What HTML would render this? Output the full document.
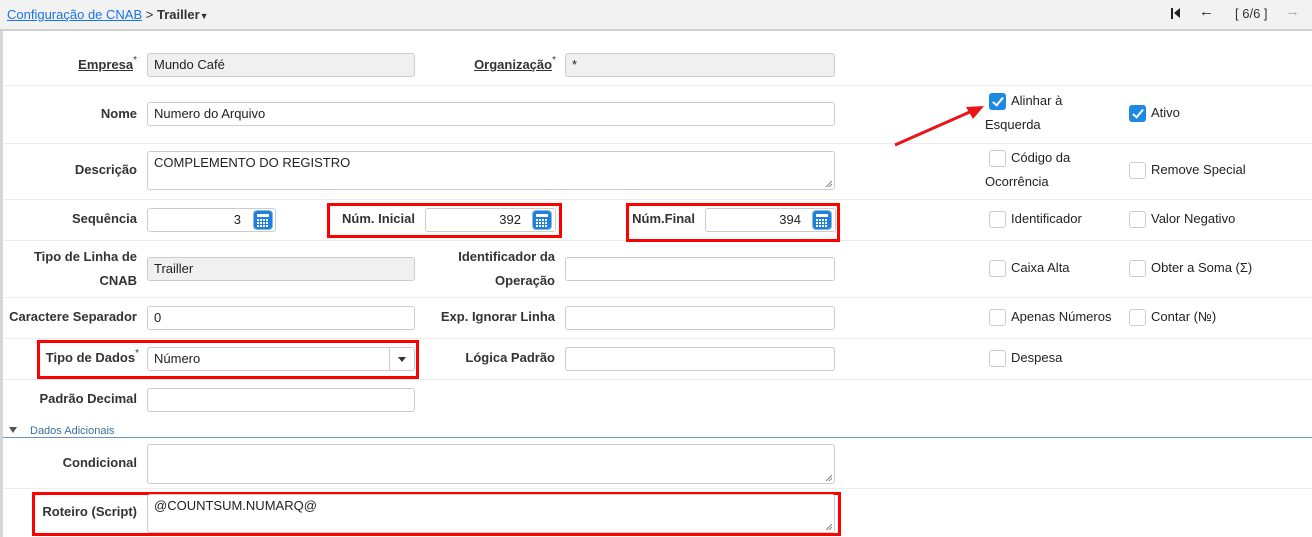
<!DOCTYPE html>
<html><head><meta charset="utf-8"><style>
*{box-sizing:border-box;margin:0;padding:0}
body{width:1312px;height:537px;overflow:hidden;background:#fff;font-family:"Liberation Sans",Arial,sans-serif;font-size:13px;color:#333;position:relative}
.a{position:absolute}
.hdr{left:0;top:0;width:1312px;height:31px;background:#f2f2f2;border-bottom:2px solid #d0d0d0}
.lb{position:absolute;text-align:right;font-weight:bold;color:#333;line-height:24px;white-space:nowrap}
.lb2{position:absolute;text-align:right;font-weight:bold;color:#333;line-height:24px}
.in{position:absolute;border:1px solid #ccc;border-radius:3px;height:24px;background:#fff;padding:0 6px;line-height:22px;color:#222;white-space:nowrap}
.ro{background:#f0f0f0}
.sep{position:absolute;left:3px;width:1309px;height:1px;background:#ececec}
.cb{position:absolute;width:17px;height:17px;border:1px solid #ccc;border-radius:3px;background:#fff}
.cb.on{background:#1e88e5;border-color:#1e88e5}
.cb.on:after{content:"";position:absolute;left:5px;top:1px;width:4px;height:9px;border:solid #fff;border-width:0 2px 2px 0;transform:rotate(40deg)}
.ct{position:absolute;color:#222;line-height:24px;white-space:nowrap}
.red{position:absolute;border:3px solid #f00}
sup{font-size:10px;font-weight:normal;vertical-align:top;position:relative;top:-4px}
.calc{position:absolute;width:20px;height:20px;border-radius:4px;background:#1e7fe0;border:1px solid #8bc}
.calc:before{content:"";position:absolute;left:3px;top:3px;width:12px;height:3px;background:#fff}
.calc:after{content:"";position:absolute;left:3px;top:8px;width:12px;height:8px;background:repeating-linear-gradient(90deg,#fff 0 2px,transparent 2px 3px),#1e7fe0;-webkit-mask:repeating-linear-gradient(0deg,#000 0 2px,transparent 2px 3px)}
.rs{position:absolute;right:2px;bottom:2px;width:6px;height:6px;background:linear-gradient(135deg,transparent 45%,#888 45%,#888 55%,transparent 55%,transparent 70%,#888 70%,#888 80%,transparent 80%)}
</style></head><body>
<div class="a" style="left:0;top:0;width:3px;height:537px;background:#d6d6d6"></div>
<div class="a hdr"></div>
<div class="a" style="left:7px;top:7px;line-height:16px;font-size:13px"><span style="color:#1a73e8;text-decoration:underline">Configuração de CNAB</span> <span style="color:#333">&gt;</span> <b style="color:#333">Trailler</b><span style="font-size:9px">&#9660;</span></div>
<div class="a" style="left:1171px;top:8px;width:2px;height:11px;background:#222"></div>
<div class="a" style="left:1174px;top:8px;width:0;height:0;border-top:5.5px solid transparent;border-bottom:5.5px solid transparent;border-right:6px solid #222"></div>
<div class="a" style="left:1199px;top:3px;font-size:15px;color:#222;font-weight:bold">&#8592;</div>
<div class="a" style="left:1235px;top:6px;color:#333">[ 6/6 ]</div>
<div class="a" style="left:1285px;top:3px;font-size:15px;color:#aaa;font-weight:bold">&#8594;</div>

<div class="sep" style="top:85px"></div>
<div class="sep" style="top:143px"></div>
<div class="sep" style="top:199px"></div>
<div class="sep" style="top:240px"></div>
<div class="sep" style="top:297px"></div>
<div class="sep" style="top:338px"></div>
<div class="sep" style="top:379px"></div>
<div class="sep" style="top:488px"></div>

<div class="lb" style="right:1175px;top:53px"><u>Empresa</u><sup>*</sup></div>
<div class="in ro" style="left:147px;top:53px;width:268px">Mundo Café</div>
<div class="lb" style="right:756px;top:53px"><u>Organização</u><sup>*</sup></div>
<div class="in ro" style="left:565px;top:53px;width:270px">*</div>

<div class="lb" style="right:1175px;top:102px">Nome</div>
<div class="in" style="left:147px;top:102px;width:688px">Numero do Arquivo</div>
<div class="cb on" style="left:989px;top:93px"></div>
<div class="ct" style="left:1011px;top:89px">Alinhar à</div>
<div class="ct" style="left:985px;top:113px">Esquerda</div>
<div class="cb on" style="left:1129px;top:105px"></div>
<div class="ct" style="left:1151px;top:101px">Ativo</div>

<div class="lb" style="right:1175px;top:158px">Descrição</div>
<div class="in" style="left:147px;top:151px;width:688px;height:39px">COMPLEMENTO DO REGISTRO<div class="rs"></div></div>
<div class="cb" style="left:989px;top:150px"></div>
<div class="ct" style="left:1011px;top:146px">Código da</div>
<div class="ct" style="left:985px;top:170px">Ocorrência</div>
<div class="cb" style="left:1129px;top:162px"></div>
<div class="ct" style="left:1151px;top:158px">Remove Special</div>

<div class="lb" style="right:1175px;top:207px">Sequência</div>
<div class="in" style="left:147px;top:208px;width:129px;text-align:right;padding-right:34px">3</div>
<div class="calc" style="left:253px;top:210px"></div>
<div class="red" style="left:327px;top:203px;width:235px;height:35px"></div>
<div class="lb" style="right:897px;top:207px">Núm. Inicial</div>
<div class="in" style="left:425px;top:208px;width:131px;text-align:right;padding-right:34px">392</div>
<div class="calc" style="left:532px;top:210px"></div>
<div class="red" style="left:626px;top:203px;width:214px;height:39px"></div>
<div class="lb" style="right:617px;top:207px">Núm.Final</div>
<div class="in" style="left:705px;top:208px;width:131px;text-align:right;padding-right:34px">394</div>
<div class="calc" style="left:812px;top:210px"></div>
<div class="cb" style="left:989px;top:211px"></div>
<div class="ct" style="left:1011px;top:207px">Identificador</div>
<div class="cb" style="left:1129px;top:211px"></div>
<div class="ct" style="left:1151px;top:207px">Valor Negativo</div>

<div class="lb2" style="right:1175px;top:245px;width:120px">Tipo de Linha de CNAB</div>
<div class="in ro" style="left:147px;top:257px;width:268px">Trailler</div>
<div class="lb2" style="right:757px;top:245px;width:120px">Identificador da Operação</div>
<div class="in" style="left:565px;top:257px;width:270px"></div>
<div class="cb" style="left:989px;top:260px"></div>
<div class="ct" style="left:1011px;top:256px">Caixa Alta</div>
<div class="cb" style="left:1129px;top:260px"></div>
<div class="ct" style="left:1151px;top:256px">Obter a Soma (Σ)</div>

<div class="lb" style="right:1175px;top:305px">Caractere Separador</div>
<div class="in" style="left:147px;top:306px;width:268px">0</div>
<div class="lb" style="right:757px;top:305px">Exp. Ignorar Linha</div>
<div class="in" style="left:565px;top:306px;width:270px"></div>
<div class="cb" style="left:989px;top:309px"></div>
<div class="ct" style="left:1011px;top:305px">Apenas Números</div>
<div class="cb" style="left:1129px;top:309px"></div>
<div class="ct" style="left:1151px;top:305px">Contar (№)</div>

<div class="red" style="left:37px;top:340px;width:382px;height:39px"></div>
<div class="lb" style="right:1173px;top:346px">Tipo de Dados<sup>*</sup></div>
<div class="in" style="left:147px;top:347px;width:268px">Número<div class="a" style="right:24px;top:0;width:1px;height:22px;background:#ccc"></div><div class="a" style="right:8px;top:9px;border-left:4px solid transparent;border-right:4px solid transparent;border-top:5px solid #333"></div></div>
<div class="lb" style="right:757px;top:346px">Lógica Padrão</div>
<div class="in" style="left:565px;top:347px;width:270px"></div>
<div class="cb" style="left:989px;top:350px"></div>
<div class="ct" style="left:1011px;top:346px">Despesa</div>

<div class="lb" style="right:1175px;top:387px">Padrão Decimal</div>
<div class="in" style="left:147px;top:388px;width:268px"></div>

<div class="a" style="left:9px;top:427px;border-left:4px solid transparent;border-right:4px solid transparent;border-top:6px solid #555"></div>
<div class="a" style="left:30px;top:424px;font-size:11px;color:#3a6fa0;line-height:14px">Dados Adicionais</div>
<div class="a" style="left:3px;top:437px;width:1309px;height:1px;background:#6a94b8"></div>
<div class="lb" style="right:1175px;top:451px">Condicional</div>
<div class="in" style="left:147px;top:444px;width:688px;height:40px"><div class="rs"></div></div>
<div class="red" style="left:32px;top:492px;width:809px;height:44px"></div>
<div class="lb" style="right:1175px;top:500px">Roteiro (Script)</div>
<div class="in" style="left:147px;top:494px;width:688px;height:39px;line-height:22px">@COUNTSUM.NUMARQ@<div class="rs"></div></div>
<svg class="a" style="left:880px;top:95px" width="120" height="60"><line x1="15" y1="50" x2="92" y2="16" stroke="#e8141a" stroke-width="3"/><polygon points="104,11 86,12 93,24" fill="#e8141a"/></svg>
</body></html>
